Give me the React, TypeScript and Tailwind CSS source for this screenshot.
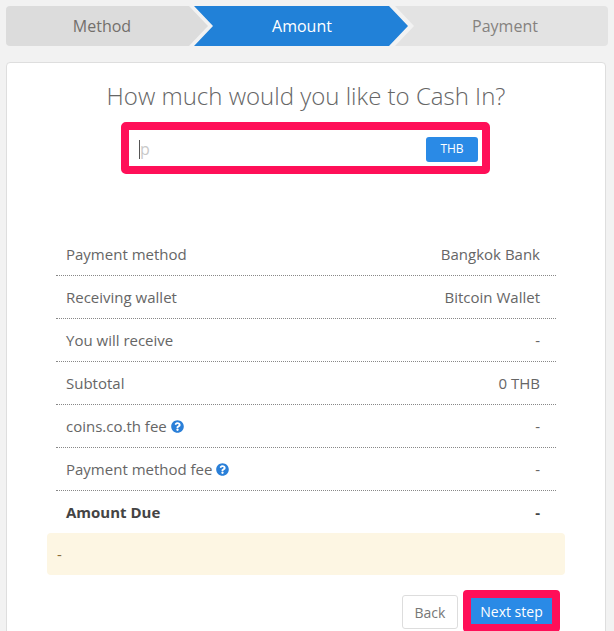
import { FaQuestionCircle } from "react-icons/fa";

const rows: { label: string; value: string; help?: boolean; bold?: boolean }[] = [
  { label: "Payment method", value: "Bangkok Bank" },
  { label: "Receiving wallet", value: "Bitcoin Wallet" },
  { label: "You will receive", value: "-" },
  { label: "Subtotal", value: "0 THB" },
  { label: "coins.co.th fee", value: "-", help: true },
  { label: "Payment method fee", value: "-", help: true },
  { label: "Amount Due", value: "-", bold: true },
];

export default function App() {
  return (
    <div className="h-[631px] overflow-hidden bg-[#f2f2f2] px-[6px] pt-[6px] font-['Open_Sans',sans-serif] text-[15px] text-[#666]">
      <div className="flex h-10 overflow-hidden rounded-[4px] text-[16px]">
        <div className="relative z-10 -mr-[20px] flex w-[208px] shrink-0 items-center justify-center bg-[#dcdcdc] pr-[16px] text-[#736f6b] [clip-path:polygon(0_0,183px_0,202px_50%,183px_100%,0_100%)]">
          Method
        </div>
        <div className="relative z-20 flex w-[214px] shrink-0 items-center justify-center bg-[#2181d8] pl-[2px] text-white [clip-path:polygon(0_0,195px_0,214px_50%,195px_100%,0_100%,19px_50%)]">
          Amount
        </div>
        <div className="relative z-10 -ml-[13px] flex flex-1 items-center justify-center bg-[#e3e3e3] pl-[7px] text-[#85827f] [clip-path:polygon(0_0,100%_0,100%_100%,0_100%,19px_50%)]">
          Payment
        </div>
      </div>

      <div className="mt-[16px] h-[600px] w-[600px] rounded-[4px] border border-[#dedede] bg-white">
        <h1 className="mt-[15px] text-center text-[24px] leading-[36px] font-light text-[#666]">
          How much would you like to Cash In?
        </h1>
        <div className="mt-[8px] ml-[114px] flex h-[52px] w-[369px] items-center justify-between rounded-[5px] border-[8px] border-[#ff0f58] pt-[2px] pl-[10px] pr-[4px]">
          <div className="relative flex h-[19px] items-center">
            <span className="h-[19px] w-px bg-[#555]"></span>
            <span className="text-[16px] leading-[19px] text-[#c9c9c9]">p</span>
          </div>
          <button className="flex h-[25px] w-[52px] items-center justify-center rounded-[3px] bg-[#2a8ae6] text-[12px] text-white">
            THB
          </button>
        </div>

        <div className="mx-[49px] mt-[59px] w-[500px]">
          {rows.map((r, i) => (
            <div
              key={r.label}
              className={`flex items-center justify-between pl-[10px] pr-[16px] ${
                i < rows.length - 1 ? "h-[43px] border-b border-dotted border-[#888]" : "h-[42px]"
              } ${r.bold ? "font-bold text-[#444]" : ""}`}
            >
              <span className="flex items-center gap-[4px]">
                {r.label}
                {r.help && <FaQuestionCircle className="text-[13px] text-[#2a7fd8]" />}
              </span>
              <span>{r.value}</span>
            </div>
          ))}
        </div>

        <div className="mx-[40px] flex h-[42px] w-[518px] items-center rounded-[4px] bg-[#fdf6e3] px-[10px] text-[#8a6d3b]">
          -
        </div>

        <div className="mt-[15px] mr-[45px] flex items-start justify-end gap-[5px]">
          <button className="mt-[5px] flex h-[34px] w-[56px] items-center justify-center rounded-[3px] border border-[#ddd] bg-white text-[14px] text-[#777]">
            Back
          </button>
          <div className="rounded-[4px] border-[8px] border-[#ff0f58]">
            <button className="flex h-[26px] w-[81px] items-center justify-center bg-[#2a8ae6] text-[14px] text-white">
              Next step
            </button>
          </div>
        </div>
      </div>
    </div>
  );
}
